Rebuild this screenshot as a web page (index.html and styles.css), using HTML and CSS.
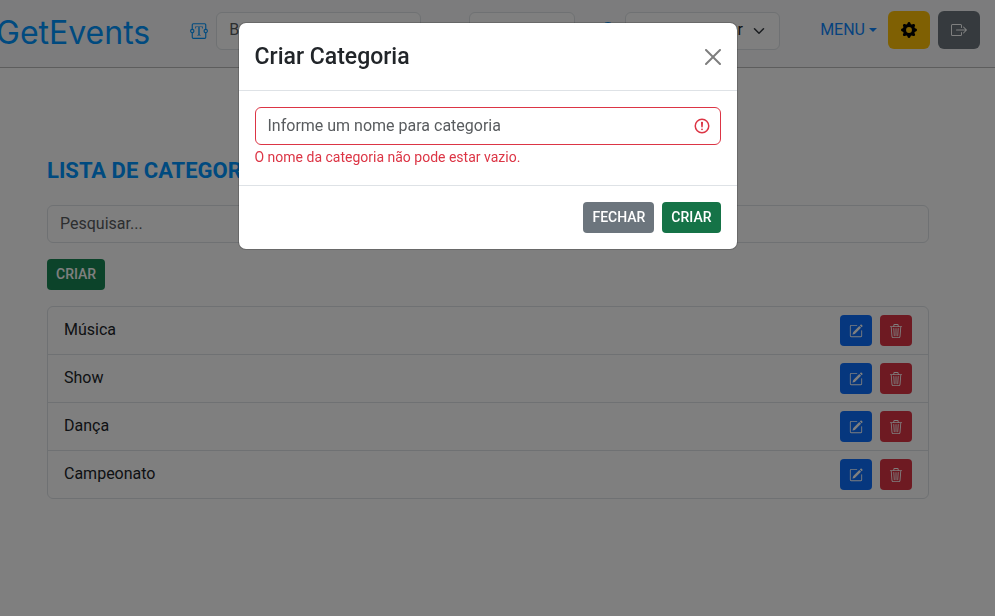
FILE: index.html
```html
<!DOCTYPE html>
<html lang="pt-BR">
<head>
<meta charset="utf-8">
<meta name="viewport" content="width=device-width, initial-scale=1">
<title>GetEvents</title>
<link rel="stylesheet" href="styles.css">
</head>
<body>
<svg class="sprite" aria-hidden="true">
  <symbol id="textarea" viewBox="0 0 16 16"><path d="M1.5 2.5A1.5 1.5 0 0 1 3 1h10a1.500 1.500 0 0 1 1.500 1.500v3.563a2 2 0 0 1 0 3.874V13.500A1.500 1.500 0 0 1 13 15H3a1.500 1.500 0 0 1-1.500-1.500V9.937a2 2 0 0 1 0-3.874zm1 3.563a2 2 0 0 1 0 3.874V13.500a.5.5 0 0 0 .5.5h10a.5.5 0 0 0 .5-.5V9.937a2 2 0 0 1 0-3.874V2.500A.5.5 0 0 0 13 2H3a.5.5 0 0 0-.5.5zM2 7a1 1 0 1 0 0 2 1 1 0 0 0 0-2m12 0a1 1 0 1 0 0 2 1 1 0 0 0 0-2"/><path d="M11.434 4H4.566L4.500 5.994h.386c.21-1.252.612-1.446 2.173-1.495l.343-.011v6.343c0 .537-.116.665-1.049.748V12h3.294v-.421c-.938-.083-1.054-.21-1.054-.748V4.488l.348.010c1.560.05 1.963.244 2.173 1.496h.386z"/></symbol>
  <symbol id="pin" viewBox="0 0 16 16"><path d="M8 16s6-5.686 6-10A6 6 0 0 0 2 6c0 4.314 6 10 6 10m0-7a3 3 0 1 1 0-6 3 3 0 0 1 0 6"/></symbol>
  <symbol id="gear" viewBox="0 0 16 16"><path d="M9.405 1.050c-.413-1.400-2.397-1.400-2.810 0l-.1.340a1.464 1.464 0 0 1-2.105.872l-.310-.170c-1.283-.698-2.686.705-1.987 1.987l.169.311c.446.820.023 1.841-.872 2.105l-.340.100c-1.400.413-1.400 2.397 0 2.810l.340.100a1.464 1.464 0 0 1 .872 2.105l-.170.310c-.698 1.283.705 2.686 1.987 1.987l.311-.169a1.464 1.464 0 0 1 2.105.872l.100.340c.413 1.400 2.397 1.400 2.810 0l.100-.340a1.464 1.464 0 0 1 2.105-.872l.310.170c1.283.698 2.686-.705 1.987-1.987l-.169-.311a1.464 1.464 0 0 1 .872-2.105l.340-.100c1.400-.413 1.400-2.397 0-2.810l-.340-.100a1.464 1.464 0 0 1-.872-2.105l.170-.310c.698-1.283-.705-2.686-1.987-1.987l-.311.169a1.464 1.464 0 0 1-2.105-.872zM8 10.930a2.929 2.929 0 1 1 0-5.860 2.929 2.929 0 0 1 0 5.860"/></symbol>
  <symbol id="exit" viewBox="0 0 16 16"><path d="M10 12.500a.5.5 0 0 1-.5.5h-8a.5.5 0 0 1-.5-.5v-9a.5.5 0 0 1 .5-.5h8a.5.5 0 0 1 .5.5v2a.5.5 0 0 0 1 0v-2A1.500 1.500 0 0 0 9.500 2h-8A1.500 1.500 0 0 0 0 3.500v9A1.500 1.500 0 0 0 1.500 14h8a1.500 1.500 0 0 0 1.500-1.500v-2a.5.5 0 0 0-1 0z"/><path d="M15.854 8.354a.5.5 0 0 0 0-.708l-3-3a.5.5 0 0 0-.708.708L14.293 7.500H5.500a.5.5 0 0 0 0 1h8.793l-2.147 2.146a.5.5 0 0 0 .708.708z"/></symbol>
  <symbol id="pencil" viewBox="0 0 16 16"><path d="M15.502 1.940a.5.5 0 0 1 0 .706L14.459 3.690l-2-2L13.502.646a.5.5 0 0 1 .707 0l1.293 1.293zm-1.750 2.456-2-2L4.939 9.210a.5.5 0 0 0-.121.196l-.805 2.414a.25.25 0 0 0 .316.316l2.414-.805a.5.5 0 0 0 .196-.120z"/><path fill-rule="evenodd" d="M1 13.500A1.500 1.500 0 0 0 2.500 15h11a1.500 1.500 0 0 0 1.500-1.500v-6a.5.5 0 0 0-1 0v6a.5.5 0 0 1-.5.5h-11a.5.5 0 0 1-.5-.5v-11a.5.5 0 0 1 .5-.5H9a.5.5 0 0 0 0-1H2.500A1.500 1.500 0 0 0 1 2.500z"/></symbol>
  <symbol id="trash" viewBox="0 0 16 16"><path d="M6.500 1h3a.5.5 0 0 1 .5.5v1H6v-1a.5.5 0 0 1 .5-.5M11 2.500v-1A1.500 1.500 0 0 0 9.500 0h-3A1.500 1.500 0 0 0 5 1.500v1H1.500a.5.5 0 0 0 0 1h.538l.853 10.660A2 2 0 0 0 4.885 16h6.230a2 2 0 0 0 1.994-1.840l.853-10.660h.538a.5.5 0 0 0 0-1zm1.958 1-.846 10.580a1 1 0 0 1-.997.920h-6.230a1 1 0 0 1-.997-.920L3.042 3.500zm-7.487 1a.5.5 0 0 1 .528.470l.500 8.500a.5.5 0 0 1-.998.060L5 5.030a.5.5 0 0 1 .470-.530Zm5.058 0a.5.5 0 0 1 .470.530l-.500 8.500a.5.5 0 1 1-.998-.060l.500-8.500a.5.5 0 0 1 .528-.470M8 4.500a.5.5 0 0 1 .5.5v8.500a.5.5 0 0 1-1 0V5a.5.5 0 0 1 .5-.5"/></symbol>
  <symbol id="chevron" viewBox="0 0 16 16"><path fill="none" stroke="currentColor" stroke-linecap="round" stroke-linejoin="round" stroke-width="2" d="m2 5 6 6 6-6"/></symbol>
  <symbol id="close" viewBox="0 0 16 16"><path d="M.293.293a1 1 0 0 1 1.414 0L8 6.586 14.293.293a1 1 0 1 1 1.414 1.414L9.414 8l6.293 6.293a1 1 0 0 1-1.414 1.414L8 9.414l-6.293 6.293a1 1 0 0 1-1.414-1.414L6.586 8 .293 1.707a1 1 0 0 1 0-1.414z"/></symbol>
  <symbol id="alert" viewBox="0 0 12 12"><circle cx="6" cy="6" r="4.500" fill="none" stroke="currentColor"/><path stroke="currentColor" stroke-linejoin="round" d="M5.800 3.600h.4L6 6.500z"/><circle cx="6" cy="8.200" r=".6"/></symbol>
</svg>

<header class="navbar">
  <a class="brand" href="#">GetEvents</a>
  <form class="filters">
    <label class="filter-icon" for="busca" aria-label="Buscar"><svg><use href="#textarea"/></svg></label>
    <input class="control filter-name" id="busca" type="text" placeholder="Buscar">
    <input class="control filter-date" type="text" aria-label="Data">
    <label class="filter-icon" for="local" aria-label="Local"><svg><use href="#pin"/></svg></label>
    <span class="select-wrap">
      <select class="control" id="local"><option>Selecionar</option></select>
      <svg class="chevron"><use href="#chevron"/></svg>
    </span>
  </form>
  <nav class="actions">
    <a class="menu" href="#">MENU</a>
    <button class="btn btn-warning" type="button" aria-label="Configurações"><svg><use href="#gear"/></svg></button>
    <button class="btn btn-secondary" type="button" aria-label="Sair"><svg><use href="#exit"/></svg></button>
  </nav>
</header>

<main class="page">
  <h1 class="page-title">LISTA DE CATEGORIAS</h1>
  <input class="control search" type="text" placeholder="Pesquisar..." aria-label="Pesquisar">
  <button class="btn btn-sm btn-success" type="button">CRIAR</button>
  <ul class="list">
    <li class="item"><span>Música</span><span class="tools"><button class="btn btn-sm btn-primary" type="button" aria-label="Editar"><svg><use href="#pencil"/></svg></button><button class="btn btn-sm btn-danger" type="button" aria-label="Excluir"><svg><use href="#trash"/></svg></button></span></li>
    <li class="item"><span>Show</span><span class="tools"><button class="btn btn-sm btn-primary" type="button" aria-label="Editar"><svg><use href="#pencil"/></svg></button><button class="btn btn-sm btn-danger" type="button" aria-label="Excluir"><svg><use href="#trash"/></svg></button></span></li>
    <li class="item"><span>Dança</span><span class="tools"><button class="btn btn-sm btn-primary" type="button" aria-label="Editar"><svg><use href="#pencil"/></svg></button><button class="btn btn-sm btn-danger" type="button" aria-label="Excluir"><svg><use href="#trash"/></svg></button></span></li>
    <li class="item"><span>Campeonato</span><span class="tools"><button class="btn btn-sm btn-primary" type="button" aria-label="Editar"><svg><use href="#pencil"/></svg></button><button class="btn btn-sm btn-danger" type="button" aria-label="Excluir"><svg><use href="#trash"/></svg></button></span></li>
  </ul>
</main>

<div class="backdrop">
  <section class="modal" role="dialog" aria-modal="true" aria-labelledby="modal-title">
    <header class="modal-header">
      <h2 class="modal-title" id="modal-title">Criar Categoria</h2>
      <button class="close" type="button" aria-label="Fechar"><svg><use href="#close"/></svg></button>
    </header>
    <div class="modal-body">
      <div class="field">
        <input class="control invalid" type="text" placeholder="Informe um nome para categoria" aria-label="Nome da categoria" aria-describedby="erro">
        <svg class="alert"><use href="#alert"/></svg>
      </div>
      <p class="error" id="erro">O nome da categoria não pode estar vazio.</p>
    </div>
    <footer class="modal-footer">
      <button class="btn btn-sm btn-secondary" type="button">FECHAR</button>
      <button class="btn btn-sm btn-success btn-hover" type="button">CRIAR</button>
    </footer>
  </section>
</div>
</body>
</html>
```
FILE: styles.css
```css
* { box-sizing: border-box; }

body {
  margin: 0;
  background: #fff;
  color: #212529;
  font: 400 16px/24px Roboto, sans-serif;
  overflow: hidden;
}

.sprite { display: none; }

svg {
  display: block;
  width: 16px;
  height: 16px;
  fill: currentColor;
}

.navbar {
  display: flex;
  align-items: center;
  height: 68px;
  padding: 0 15px 6px 0;
  background: #f8f9fa;
  border-bottom: 1px solid #bbb;
}

.brand {
  margin-left: -4px;
  padding-top: 4px;
  color: #0095ff;
  font: 400 32px/48px Inter, sans-serif;
  text-decoration: none;
}

.filters {
  display: flex;
  align-items: center;
  flex: 1;
  max-width: 590px;
  margin-left: auto;
}

.filter-icon {
  margin: 0 8px 0 0;
  color: #0095ff;
}

.filter-icon svg {
  width: 18px;
  height: 18px;
}

.control {
  display: block;
  width: 100%;
  height: 38px;
  padding: 5px 12px 7px;
  border: 1px solid #dee2e6;
  border-radius: 6px;
  background: #fff;
  color: #212529;
  font: inherit;
  appearance: none;
}

.control::placeholder {
  color: #595c5f;
  opacity: 1;
}

.filters .filter-name { width: 205px; }

.filters .filter-date {
  width: 106px;
  margin: 0 24px 0 48px;
}

.select-wrap {
  display: flex;
  align-items: center;
  flex: 1;
}

.select-wrap .control {
  padding-left: 42px;
}

.chevron {
  width: 12px;
  height: 12px;
  margin-left: -27px;
  pointer-events: none;
  color: #343a40;
}

.actions {
  display: flex;
  align-items: center;
  gap: 8px;
  margin: 0 0 2px 40px;
}

.menu {
  display: flex;
  align-items: center;
  gap: 4px;
  margin-right: 3px;
  color: #0d85fd;
  text-decoration: none;
}

.menu::after {
  content: "";
  border: 4px solid transparent;
  border-top-color: currentColor;
  border-bottom: 0;
}

.btn {
  padding: 10px 12px;
  border: 1px solid transparent;
  border-radius: 6px;
  color: #fff;
  font: 400 16px/24px Roboto, sans-serif;
}

.btn-sm {
  min-height: 31px;
  padding: 4px 8px;
  border-radius: 4px;
  font: 500 14px/21px Roboto, sans-serif;
}

.btn-sm svg {
  width: 14px;
  height: 14px;
}

.btn-warning { background: #ffc107; color: #000; }
.btn-secondary { background: #6c757d; }
.btn-success { background: #198754; }
.btn-hover { background: #157347; }
.btn-primary { background: #0d6efd; }
.btn-danger { background: #dc3545; }

.page {
  margin: 88px 66px 0 47px;
}

.page-title {
  margin: 0 0 20px;
  color: #0095ff;
  font-size: 22px;
  line-height: 29px;
  font-weight: 700;
}

.search { margin-bottom: 16px; }

.list {
  margin: 16px 0 0;
  padding: 0;
  border: 1px solid #dee2e6;
  border-radius: 6px;
  list-style: none;
}

.item {
  display: flex;
  justify-content: space-between;
  align-items: flex-start;
  padding: 8px 16px;
  line-height: 29px;
}

.item + .item { border-top: 1px solid #dee2e6; }

.tools {
  display: flex;
  gap: 8px;
}

.backdrop {
  position: fixed;
  inset: 0;
  padding: 22px 20px 0 0;
  background: rgba(0, 0, 0, 0.5);
}

.modal {
  max-width: 500px;
  margin: 0 auto;
  border: 1px solid rgba(0, 0, 0, 0.175);
  border-radius: 8px;
  background: #fff;
  background-clip: padding-box;
}

.modal-header {
  display: flex;
  justify-content: space-between;
  align-items: center;
  padding: 16px;
  border-bottom: 1px solid #dee2e6;
}

.modal-title {
  margin: 0;
  font-size: 23px;
  line-height: 35px;
  font-weight: 500;
}

.close {
  padding: 0;
  border: 0;
  background: none;
  color: #000;
  opacity: 0.5;
}

.modal-body { padding: 16px 16px 17px; }

.field {
  display: flex;
  align-items: center;
}

.invalid { border-color: #dc3545; }

.alert {
  flex: none;
  width: 18px;
  height: 18px;
  margin: 0 10px 0 -28px;
  color: #dc3545;
}

.error {
  margin: 2px 0 0;
  color: #dc3545;
  font-size: 14px;
  line-height: 21px;
}

.modal-footer {
  display: flex;
  justify-content: flex-end;
  gap: 8px;
  padding: 16px;
  border-top: 1px solid #dee2e6;
}
```
